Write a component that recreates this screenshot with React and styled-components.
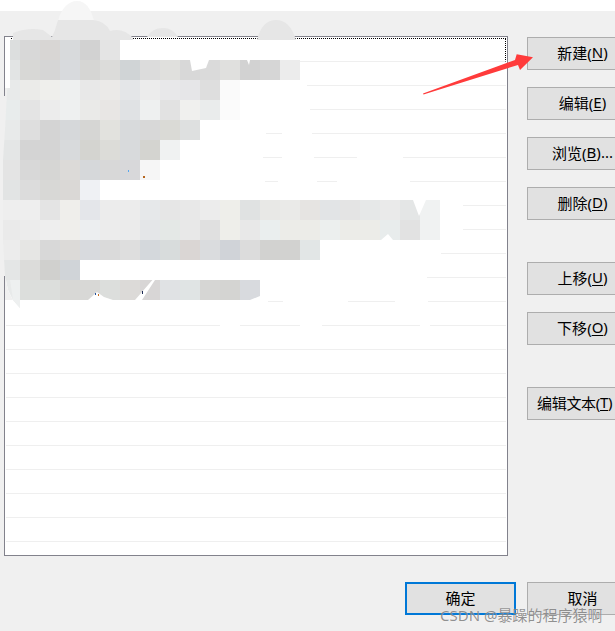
import React from 'react'
import styled, { createGlobalStyle } from 'styled-components'

const GlobalStyle = createGlobalStyle`
  html, body {
    margin: 0;
    padding: 0;
    background: #f0f0f0;
  }
`

const Ventana = styled.div`
  position: relative;
  width: 615px;
  height: 631px;
  overflow: hidden;
  background: #f0f0f0;
  font-family: "Noto Sans", "Noto Sans CJK SC", sans-serif;
  font-size: 15px;
  color: #000;
`
const BandaSuperior = styled.div`
  height: 11px;
  background: #fff;
`
const Cuerpo = styled.div`
  display: flex;
  gap: 19px;
  margin-top: 25px;
  padding-left: 4px;
`
const Lista = styled.div`
  box-sizing: border-box;
  flex: 0 0 504px;
  height: 520px;
  padding: 1px 1px 0;
  background: #fff;
  border: 1px solid #82828c;
`
const Fila = styled.div`
  box-sizing: border-box;
  height: 24px;
  border-bottom: 1px solid #efefef;
  border-top: ${props => (props.$foco ? '1px dotted #000' : '0')};
  border-right: ${props => (props.$foco ? '1px dotted #000' : '0')};
`
const ColumnaBotones = styled.div`
  display: flex;
  flex-direction: column;
  gap: 42px;
  padding-top: 1px;
`
const GrupoBotones = styled.div`
  display: flex;
  flex-direction: column;
  gap: 17px;
`
const Boton = styled.div`
  box-sizing: border-box;
  flex: 0 0 auto;
  display: flex;
  align-items: center;
  justify-content: ${props => (props.$largo ? 'flex-start' : 'center')};
  width: 111px;
  height: 33px;
  padding: ${props => (props.$largo ? '0 0 3px 9px' : '0 0 3px')};
  letter-spacing: ${props => (props.$largo ? '-0.3px' : '0')};
  background: #e1e1e1;
  white-space: nowrap;
  border: ${props => (props.$principal ? '2px solid #0078d7' : '1px solid #adadad')};
`
const Subrayado = styled.span`
  text-decoration: underline;
  text-underline-offset: 2px;
`
const Pie = styled.div`
  display: flex;
  gap: 11px;
  margin-top: 26px;
  padding-left: 405px;
`
const Capa = styled.svg`
  position: absolute;
  top: 0;
  left: 0;
  pointer-events: none;
`
const MarcaAgua = styled.div`
  position: absolute;
  left: 440px;
  top: 606px;
  font-size: 15px;
  line-height: 18px;
  white-space: nowrap;
  color: rgba(105, 105, 105, 0.72);
  text-shadow: 0 0 1px rgba(255, 255, 255, 0.6);
`

const mosaico = [
  { y: 40, x: 0, c: ['dcdede', 'd8d8d8', 'd8d6d4', 'd8dadc', 'd2d2d2', 'e4e4e4'] },
  { y: 60, x: 0, c: ['e2e4e4', 'd8d8d6', 'd6d6d6', 'd8dadd', 'd6d6d4', 'dcdcda', 'd0d4d6', 'dcdcdc', 'e0e0dd', 'd8d8d8', 'dadada', 'e0e0de', 'd2d2d2', 'd6d6d6', 'ececec'] },
  { y: 80, x: 0, c: ['e8eaea', 'ebebe9', 'efefec', 'eef0f0', 'e8e8e8', 'ebeae8', 'e4e6e8', 'ececec', 'e8e8ea', 'e6e6e8', 'dedede', 'fafafa'] },
  { y: 100, x: 0, c: ['e8ecec', 'e4e4e4', 'ececec', 'eef0f0', 'eaeae8', 'e8e6e4', 'e0e2e4', 'eef0f0', 'e2e2e2', 'f0f0ee', 'eaecec', 'fbfbfb'] },
  { y: 120, x: 0, c: ['e8eaea', 'dedede', 'd4d4d4', 'd6d8da', 'd6d6d4', 'e2e2de', 'd8dadc', 'd8d8d8', 'dadad6', 'dee0e0'] },
  { y: 140, x: 0, c: ['e4e6e6', 'd4d4d4', 'd4d4d4', 'd8dadc', 'd4d4d0', 'dcdcd8', 'd8dadc', 'd4d4d0', 'f0f2f2'] },
  { y: 160, x: 0, c: ['e4e4e4', 'd8d8d8', 'd6d6d4', 'dcdad8', 'd6d8da', 'd8d8d8', 'd8d8da', 'f6f6f6'] },
  { y: 180, x: 0, c: ['e2e4e4', 'dcdcdc', 'd8d8d6', 'dad8d6', 'eff1f4'] },
  { y: 200, x: 0, c: ['eeeeee', 'eeeeee', 'e4e4e4', 'efeeeb', 'e4e6ea', 'ececec', 'ececec', 'e6e8ea', 'e6e6e6', 'e8e8e8', 'ececec', 'eeeeea', 'e0e2e2', 'e8e8e6', 'eaeae8', 'e6e4e2', 'e2e4e6', 'e4e4e4', 'e6e8e8', 'eaeaea', 'e4e6e6', 'f0f2f2'] },
  { y: 220, x: 0, c: ['eaeaea', 'ececec', 'eeeeee', 'efeeeb', 'eceef0', 'ececec', 'ebebeb', 'e4e6e8', 'e4e8e6', 'e8e8e8', 'e0e0e0', 'eeeeea', 'e8e8e8', 'eaeeee', 'ecece8', 'ecece8', 'ecefee', 'ecece8', 'ecece8', 'e8ecec', 'e2e2e2', 'f0f2f2'] },
  { y: 240, x: 0, c: ['ececec', 'e6e6e4', 'd8d8d8', 'dcdad8', 'd8dade', 'dadada', 'dedede', 'd4d8dc', 'd8dcdc', 'dad6d4', 'dadcde', 'd0d3d8', 'dcdcdc', 'd2d2d0', 'd2d2d0', 'e2e6e6'] },
  { y: 260, x: 0, c: ['e4e6e6', 'dcdcda', 'd0d0ce', 'd0d4d8'] },
  { y: 280, x: 20, c: ['dcdedc', 'dcdedc', 'd8d8d6', 'd8d8d6', 'dcdedc', 'dcdad8', 'd8d6d6', 'e0e2e4', 'e0e4e4', 'd6d6d4', 'd4d4d2', 'd8dade'] },
]

// tramos de las lineas de la lista tapados por el borron blanco
const borrados = [
  [61, 6, 300], [85, 6, 307], [109, 6, 310],
  [133, 6, 266], [133, 282, 312],
  [157, 6, 263], [157, 282, 314], [157, 357, 403],
  [181, 6, 265], [181, 278, 317], [181, 337, 410],
  [205, 6, 463], [229, 6, 463], [253, 6, 441], [277, 6, 427],
  [301, 6, 268], [301, 283, 348], [301, 395, 428],
  [325, 220, 240], [325, 300, 322], [325, 420, 430],
]

const Borron = () => (
  <Capa width="615" height="631" viewBox="0 0 615 631">
    {borrados.map(([y, a, b]) => (
      <rect key={y + '-' + a} x={a} y={y} width={b - a} height="1" fill="#fff" />
    ))}
    <path d="M58 21C61 9 68 1 77 1C86 1 91 9 94 21Z" fill="#f6f6f6" />
    <path d="M13 40L13 33Q28 27 43 30L52 37L55 30L58 20H93Q105 21 110 31Q123 27 133 38V40Z" fill="#e6e6e6" />
    <path d="M147 37Q152 28 163 28Q173 28 178 37Z" fill="#e6e6e6" />
    <path d="M257 40Q262 20 276 20Q290 20 296 40Z" fill="#e6e6e6" />
    <path d="M10 60L7 92L5 130L3 160L3 240L5 276L8 290L13 300L20 308V60Z" fill="#e8eaea" />
    {mosaico.map(fila =>
      fila.c.map((color, i) => (
        <rect key={fila.y + '-' + i} x={fila.x + i * 20} y={fila.y} width="20" height="20" fill={'#' + color} />
      ))
    )}
    <path d="M0 40H10V60L7 92L5 130L3 160V240L5 276L8 290L13 300H0Z" fill="#f0f0f0" />
    <rect x="4" y="36" width="1" height="60" fill="#82828c" />
    <rect x="5" y="38" width="5" height="50" fill="#fff" />
    <rect x="4" y="276" width="1" height="280" fill="#82828c" />
    <path d="M10 280H20V308L13 300Z" fill="#eef0f0" />
    <path d="M190 60H209L206 68L192 71Z M247 60H250L249 65Z" fill="#fff" />
    <path d="M413 200L419 216L426 200Z M381 240L388 234L393 240Z M250 300L260 296V300Z" fill="#fff" />
    <path d="M88 300L97 292L104 297L113 300Z M135 300L155 277V280L142 300Z" fill="#fff" />
    <rect x="95" y="293" width="1" height="2" fill="#1f4e9c" />
    <rect x="98" y="294" width="1" height="2" fill="#c86a1a" />
    <rect x="142" y="291" width="1" height="3" fill="#1a2a55" />
    <rect x="128" y="170" width="1" height="2" fill="#5aa7ee" />
    <rect x="143" y="176" width="2" height="2" fill="#b5651d" />
    <path d="M423 93.6L515 60L516.7 54.3L533 57.3L520 70L518 65L423.5 94.5Z" fill="#ff3b3b" />
  </Capa>
)

const etiquetas = [
  [['新建', 'N'], ['编辑', 'E'], ['浏览', 'B', '...'], ['删除', 'D']],
  [['上移', 'U'], ['下移', 'O']],
  [['编辑文本', 'T']],
]

const TextoBoton = ({ texto, letra, resto }) => (
  <>
    {texto}(<Subrayado>{letra}</Subrayado>){resto}
  </>
)

export default function App() {
  return (
    <Ventana>
      <GlobalStyle />
      <BandaSuperior />
      <Cuerpo>
        <Lista>
          {Array.from({ length: 21 }, (_, i) => (
            <Fila key={i} $foco={i === 0} />
          ))}
        </Lista>
        <ColumnaBotones>
          {etiquetas.map((grupo, i) => (
            <GrupoBotones key={i}>
              {grupo.map(([texto, letra, resto]) => (
                <Boton key={texto} $largo={texto.length > 2}>
                  <TextoBoton texto={texto} letra={letra} resto={resto} />
                </Boton>
              ))}
            </GrupoBotones>
          ))}
        </ColumnaBotones>
      </Cuerpo>
      <Pie>
        <Boton $principal>确定</Boton>
        <Boton>取消</Boton>
      </Pie>
      <Borron />
      <MarcaAgua>CSDN @暴躁的程序猿啊</MarcaAgua>
    </Ventana>
  )
}
